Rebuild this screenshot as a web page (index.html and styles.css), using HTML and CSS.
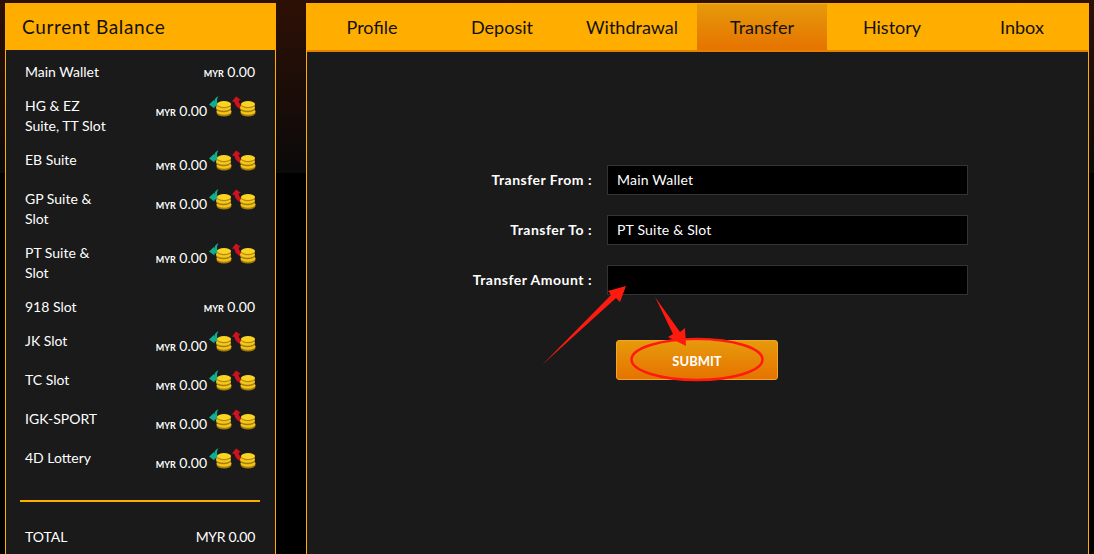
FILE: index.html
```html
<!DOCTYPE html>
<html lang="en">
<head>
  <meta charset="UTF-8">
  <title>Transfer</title>
  <link rel="stylesheet" href="styles.css">
</head>
<body>
  <svg class="icon-defs" width="0" height="0">
    <defs>
      <g id="coins">
        <ellipse cx="16" cy="17" rx="7.5" ry="3.5" fill="#a87c0a"/>
        <ellipse cx="16" cy="15.5" rx="7.5" ry="3.2" fill="#f0c419"/>
        <ellipse cx="15.5" cy="13" rx="7.5" ry="3.2" fill="#a87c0a"/>
        <ellipse cx="15.5" cy="11.5" rx="7.5" ry="3.2" fill="#f2c81c"/>
        <ellipse cx="16" cy="9" rx="7" ry="3.2" fill="#b8890c"/>
        <ellipse cx="16" cy="8" rx="7" ry="3" fill="#f9d423"/>
      </g>
      <g id="coin-in">
        <path d="M10.5 0 C7.5 1.5 6.5 3 6.3 5.5 L5.8 4 L1 8.5 L6.5 12.5 L6.5 10.5 L11 10.5 C8.5 7 8.5 3 10.5 0Z" fill="#12ad8e"/>
        <use href="#coins"/>
      </g>
      <g id="coin-out">
        <path d="M4 0.5 L0 5.5 L2.5 6 C3 9 5 12 9 13.5 L10 9.5 C8 8.5 6.8 7 6.5 4.5 L9 4 Z" fill="#cf1220"/>
        <use href="#coins"/>
      </g>
    </defs>
  </svg>

  <div class="page">
    <aside class="balance">
      <h2 class="balance-title">Current Balance</h2>
      <div class="balance-body">
        <div class="wallet-row">
          <span class="wallet-name">Main Wallet</span>
          <span class="wallet-amount"><small>MYR</small> 0.00</span>
        </div>
        <div class="wallet-row has-icons">
          <span class="wallet-name">HG &amp; EZ<br>Suite, TT Slot</span>
          <span class="wallet-amount"><small>MYR</small> 0.00</span>
          <span class="wallet-icons">
            <svg width="24" height="24"><use href="#coin-in"/></svg>
            <svg width="24" height="24"><use href="#coin-out"/></svg>
          </span>
        </div>
        <div class="wallet-row has-icons">
          <span class="wallet-name">EB Suite</span>
          <span class="wallet-amount"><small>MYR</small> 0.00</span>
          <span class="wallet-icons">
            <svg width="24" height="24"><use href="#coin-in"/></svg>
            <svg width="24" height="24"><use href="#coin-out"/></svg>
          </span>
        </div>
        <div class="wallet-row has-icons">
          <span class="wallet-name">GP Suite &amp;<br>Slot</span>
          <span class="wallet-amount"><small>MYR</small> 0.00</span>
          <span class="wallet-icons">
            <svg width="24" height="24"><use href="#coin-in"/></svg>
            <svg width="24" height="24"><use href="#coin-out"/></svg>
          </span>
        </div>
        <div class="wallet-row has-icons">
          <span class="wallet-name">PT Suite &amp;<br>Slot</span>
          <span class="wallet-amount"><small>MYR</small> 0.00</span>
          <span class="wallet-icons">
            <svg width="24" height="24"><use href="#coin-in"/></svg>
            <svg width="24" height="24"><use href="#coin-out"/></svg>
          </span>
        </div>
        <div class="wallet-row">
          <span class="wallet-name">918 Slot</span>
          <span class="wallet-amount"><small>MYR</small> 0.00</span>
        </div>
        <div class="wallet-row has-icons">
          <span class="wallet-name">JK Slot</span>
          <span class="wallet-amount"><small>MYR</small> 0.00</span>
          <span class="wallet-icons">
            <svg width="24" height="24"><use href="#coin-in"/></svg>
            <svg width="24" height="24"><use href="#coin-out"/></svg>
          </span>
        </div>
        <div class="wallet-row has-icons">
          <span class="wallet-name">TC Slot</span>
          <span class="wallet-amount"><small>MYR</small> 0.00</span>
          <span class="wallet-icons">
            <svg width="24" height="24"><use href="#coin-in"/></svg>
            <svg width="24" height="24"><use href="#coin-out"/></svg>
          </span>
        </div>
        <div class="wallet-row has-icons">
          <span class="wallet-name">IGK-SPORT</span>
          <span class="wallet-amount"><small>MYR</small> 0.00</span>
          <span class="wallet-icons">
            <svg width="24" height="24"><use href="#coin-in"/></svg>
            <svg width="24" height="24"><use href="#coin-out"/></svg>
          </span>
        </div>
        <div class="wallet-row has-icons">
          <span class="wallet-name">4D Lottery</span>
          <span class="wallet-amount"><small>MYR</small> 0.00</span>
          <span class="wallet-icons">
            <svg width="24" height="24"><use href="#coin-in"/></svg>
            <svg width="24" height="24"><use href="#coin-out"/></svg>
          </span>
        </div>
        <hr class="balance-line">
        <div class="wallet-row">
          <span class="wallet-name">TOTAL</span>
          <span class="wallet-total">MYR 0.00</span>
        </div>
      </div>
    </aside>

    <main class="account">
      <nav class="tabs">
        <a class="tab" href="#">Profile</a>
        <a class="tab" href="#">Deposit</a>
        <a class="tab" href="#">Withdrawal</a>
        <a class="tab active" href="#">Transfer</a>
        <a class="tab" href="#">History</a>
        <a class="tab" href="#">Inbox</a>
      </nav>
      <form class="transfer-form">
        <div class="form-row">
          <label class="form-label">Transfer From :</label>
          <div class="form-field">Main Wallet</div>
        </div>
        <div class="form-row">
          <label class="form-label">Transfer To :</label>
          <div class="form-field">PT Suite &amp; Slot</div>
        </div>
        <div class="form-row">
          <label class="form-label">Transfer Amount :</label>
          <input class="form-field" type="text">
        </div>
        <button class="submit-btn" type="button">SUBMIT</button>
      </form>
    </main>
  </div>

  <!-- red markup drawn on top of the screenshot -->
  <svg class="markup" width="1094" height="554">
    <polygon points="542,365 611,295 608,291 626,286 620,302 616,298" fill="#ff1a10"/>
    <polygon points="655,297 680,332 685,328 686,346 668,337 673,334" fill="#ff1a10"/>
    <ellipse cx="697" cy="359.5" rx="65.5" ry="20.5" fill="none" stroke="#ff1a10" stroke-width="2.5"/>
  </svg>
</body>
</html>
```

FILE: styles.css
```css
body {
  margin: 0;
  height: 100vh;
  overflow: hidden;
  font-family: "Lato", sans-serif;
  font-size: 14px;
  color: #fff;
  background: #000 linear-gradient(to bottom, #2e1005, #0a0a0a) no-repeat;
  background-size: 100% 173px;
}

.icon-defs {
  position: absolute;
}

.page {
  display: flex;
  gap: 30px;
  height: 100%;
  padding: 3px 5px 0;
  box-sizing: border-box;
}

/* left balance panel */
.balance {
  width: 271px;
  flex-shrink: 0;
  display: flex;
  flex-direction: column;
}

.balance-title {
  margin: 0;
  height: 47px;
  padding-left: 17px;
  line-height: 48px;
  font-size: 19px;
  font-weight: 400;
  letter-spacing: 0.65px;
  color: #111;
  background: #ffae00;
}

.balance-body {
  flex: 1;
  padding: 12px 20px 0 19px;
  background: #1a1a1a;
  border-left: 1px solid #ffae00;
  border-right: 1px solid #ffae00;
}

.wallet-row {
  display: flex;
  justify-content: space-between;
  align-items: flex-start;
  line-height: 20px;
  margin-bottom: 14px;
}

.wallet-name {
  flex: 1;
}

.wallet-amount small {
  font-size: 9px;
  font-weight: 700;
  line-height: 0;
}

.wallet-total {
  letter-spacing: -0.3px;
}

.has-icons .wallet-amount {
  margin-top: 5px;
}

.wallet-icons {
  display: flex;
  height: 25px;
  margin: 0 -1px 0 1px;
}

.balance-line {
  margin: 27px -5px 25px -5px;
  height: 2px;
  border: 0;
  background: #ffae00;
}

/* right account panel */
.account {
  flex: 1;
  display: flex;
  flex-direction: column;
  background: #1a1a1a;
  border-left: 1px solid #ffae00;
  border-right: 1px solid #ffae00;
}

.tabs {
  display: flex;
  height: 47px;
  padding-right: 1px;
  background: #ffae00;
  border-bottom: 2px solid #e67e00;
}

.tab {
  flex: 1;
  margin-top: 1px;
  text-align: center;
  line-height: 47px;
  font-size: 18px;
  color: #111;
  text-decoration: none;
}

.tab.active {
  background: linear-gradient(to bottom, #e69a0b, #e67300);
}

.transfer-form {
  padding-top: 113px;
}

.form-row {
  display: flex;
  align-items: center;
  margin-bottom: 20px;
}

.form-label {
  width: 285px;
  margin-right: 15px;
  padding-bottom: 2px;
  text-align: right;
  font-weight: 700;
  letter-spacing: 0.5px;
}

.form-field {
  width: 361px;
  height: 30px;
  padding: 0 9px;
  box-sizing: border-box;
  line-height: 28px;
  font-family: inherit;
  font-size: 14px;
  letter-spacing: 0.2px;
  color: #fff;
  background: #000;
  border: 1px solid #333;
}

.submit-btn {
  display: block;
  width: 162px;
  height: 40px;
  margin: 45px 0 0 309px;
  padding: 2px 0 0;
  font-family: inherit;
  font-size: 13px;
  font-weight: 700;
  color: #fff;
  background: linear-gradient(to bottom, #e69a0b, #e67300);
  border: 1px solid #f0a62a;
  border-radius: 3px;
}

.markup {
  position: absolute;
  top: 0;
  left: 0;
  pointer-events: none;
}
```
